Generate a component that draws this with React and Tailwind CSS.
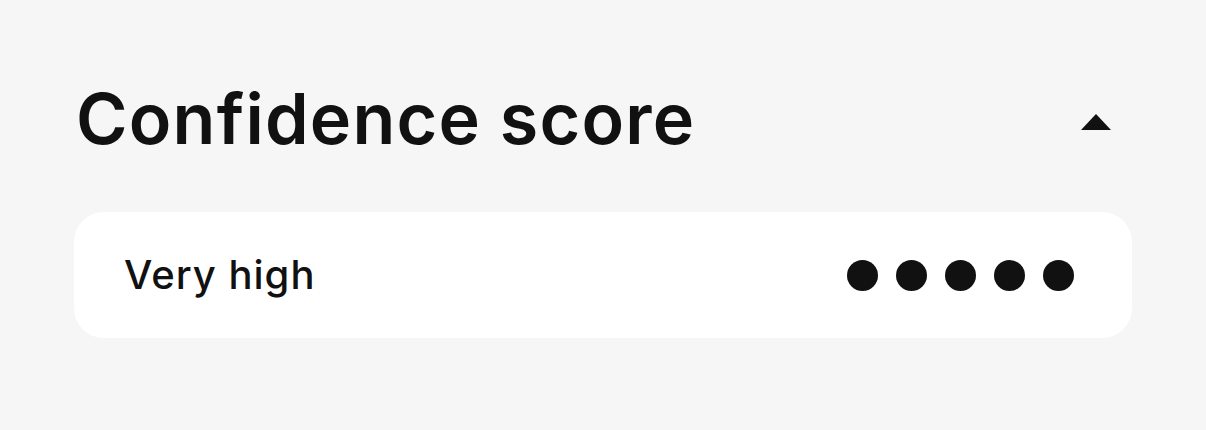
export default function App() {
  return (
    <div className="w-[1206px] h-[430px] bg-[#f6f6f6] px-[74px] pt-[74px]" style={{ fontFamily: 'Inter, "Noto Sans", sans-serif' }}>
      <div className="flex items-center justify-between h-[90px] pl-[2px] pr-[21px]">
        <h1 className="text-[70px] leading-none font-semibold text-[#111111] tracking-[1.2px]">Confidence score</h1>
        <svg width="30" height="16" viewBox="0 0 30 16" className="block mt-[6px]">
          <path d="M15 0 L30 16 L0 16 Z" fill="#111111" />
        </svg>
      </div>
      <div className="mt-[48px] h-[126px] bg-white rounded-[30px] flex items-center justify-between pl-[50px] pr-[58px]">
        <span className="text-[40px] font-medium text-[#111111] leading-none tracking-[1px]">Very high</span>
        <div className="flex items-center gap-[18px]">
          {[0, 1, 2, 3, 4].map((i) => (
            <div key={i} className="w-[31px] h-[31px] rounded-full bg-[#111111]" />
          ))}
        </div>
      </div>
    </div>
  );
}
